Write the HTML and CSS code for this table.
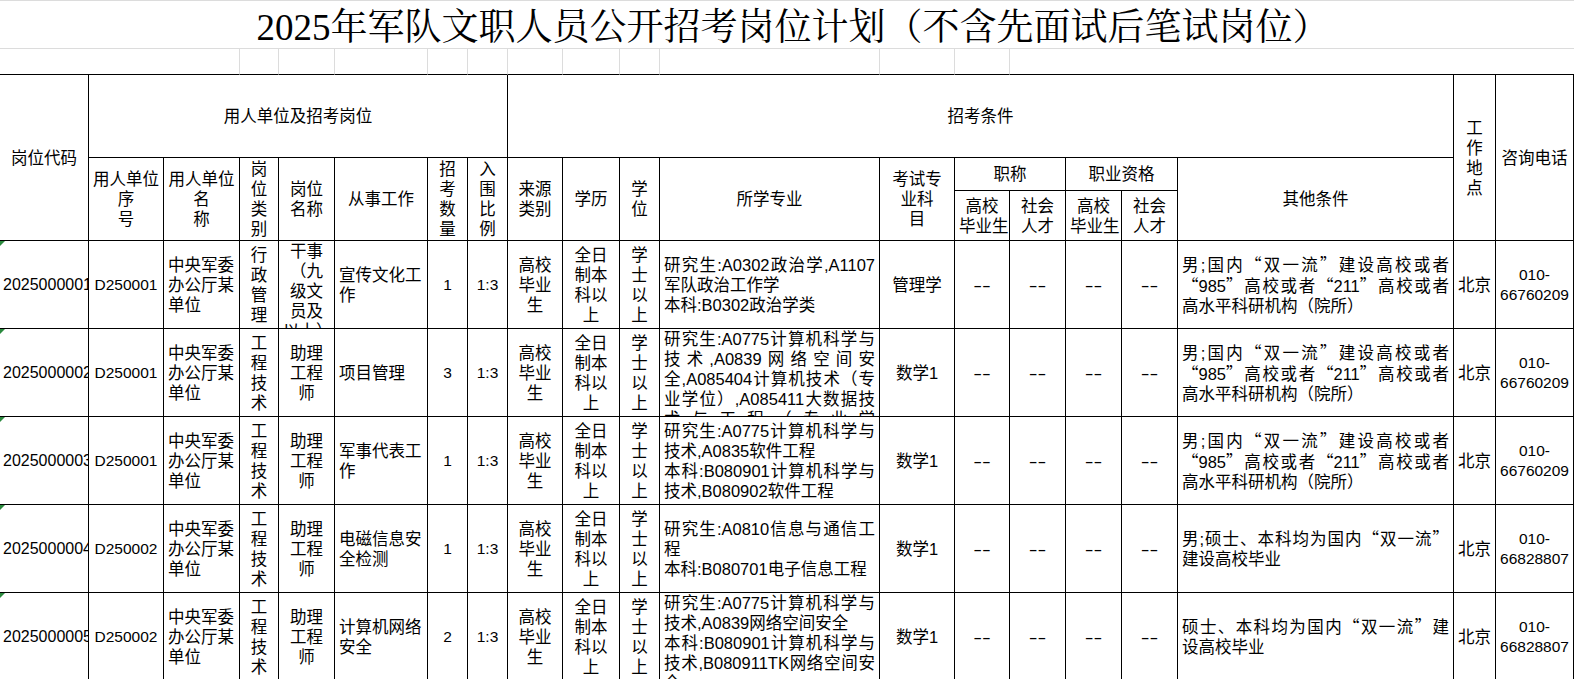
FILE: index.html
```html
<!DOCTYPE html>
<html lang="zh-CN">
<head>
<meta charset="utf-8">
<title>2025年军队文职人员公开招考岗位计划</title>
<link rel="stylesheet" href="styles.css">
</head>
<body>
<div class="sheet">
  <div class="title">2025年军队文职人员公开招考岗位计划（不含先面试后笔试岗位）</div>

  <div class="sp sp3"></div>
  <div class="sp"></div><div class="sp"></div><div class="sp"></div><div class="sp"></div>
  <div class="sp"></div><div class="sp"></div><div class="sp"></div><div class="sp"></div>
  <div class="sp"></div><div class="sp"></div><div class="sp"></div>
  <div class="sp sp6"></div>

  <div class="c rs3"><div class="t">岗位代码</div></div>
  <div class="c cs7"><div class="t">用人单位及招考岗位</div></div>
  <div class="c cs10"><div class="t">招考条件</div></div>
  <div class="c rs3"><div class="t">工<br>作<br>地<br>点</div></div>
  <div class="c rs3"><div class="t">咨询电话</div></div>

  <div class="c rs2"><div class="t">用人单位<br>序<br>号</div></div>
  <div class="c rs2"><div class="t">用人单位<br>名<br>称</div></div>
  <div class="c rs2"><div class="t">岗<br>位<br>类<br>别</div></div>
  <div class="c rs2"><div class="t">岗位<br>名称</div></div>
  <div class="c rs2"><div class="t">从事工作</div></div>
  <div class="c rs2"><div class="t">招<br>考<br>数<br>量</div></div>
  <div class="c rs2"><div class="t">入<br>围<br>比<br>例</div></div>
  <div class="c rs2"><div class="t">来源<br>类别</div></div>
  <div class="c rs2"><div class="t">学历</div></div>
  <div class="c rs2"><div class="t">学<br>位</div></div>
  <div class="c rs2"><div class="t">所学专业</div></div>
  <div class="c rs2"><div class="t">考试专<br>业科<br>目</div></div>
  <div class="c cs2"><div class="t">职称</div></div>
  <div class="c cs2"><div class="t">职业资格</div></div>
  <div class="c rs2"><div class="t">其他条件</div></div>
  <div class="c"><div class="t">高校<br>毕业生</div></div>
  <div class="c"><div class="t">社会<br>人才</div></div>
  <div class="c"><div class="t">高校<br>毕业生</div></div>
  <div class="c"><div class="t">社会<br>人才</div></div>

  <!-- row 1 -->
  <div class="c l code"><div class="t">2025000001</div></div>
  <div class="c num"><div class="t">D250001</div></div>
  <div class="c l"><div class="t">中央军委<br>办公厅某<br>单位</div></div>
  <div class="c"><div class="t">行<br>政<br>管<br>理</div></div>
  <div class="c"><div class="t">干事<br>（九<br>级文<br>员及<br>以上）</div></div>
  <div class="c l"><div class="t">宣传文化工<br>作</div></div>
  <div class="c num"><div class="t">1</div></div>
  <div class="c num"><div class="t">1:3</div></div>
  <div class="c"><div class="t">高校<br>毕业<br>生</div></div>
  <div class="c"><div class="t">全日<br>制本<br>科以<br>上</div></div>
  <div class="c"><div class="t">学<br>士<br>以<br>上</div></div>
  <div class="c l"><div class="t"><div class="j">研究生:A0302政治学,A1107</div><div>军队政治工作学</div><div>本科:B0302政治学类</div></div></div>
  <div class="c"><div class="t">管理学</div></div>
  <div class="c dash"><div class="t">--</div></div>
  <div class="c dash"><div class="t">--</div></div>
  <div class="c dash"><div class="t">--</div></div>
  <div class="c dash"><div class="t">--</div></div>
  <div class="c l"><div class="t"><div class="j">男;国内<span class="q">“</span>双一流<span class="q">”</span>建设高校或者</div><div class="j"><span class="q">“</span>985<span class="q">”</span>高校或者<span class="q">“</span>211<span class="q">”</span>高校或者</div><div>高水平科研机构（院所）</div></div></div>
  <div class="c"><div class="t">北京</div></div>
  <div class="c num"><div class="t">010-<br>66760209</div></div>

  <!-- row 2 -->
  <div class="c l code"><div class="t">2025000002</div></div>
  <div class="c num"><div class="t">D250001</div></div>
  <div class="c l"><div class="t">中央军委<br>办公厅某<br>单位</div></div>
  <div class="c"><div class="t">工<br>程<br>技<br>术</div></div>
  <div class="c"><div class="t">助理<br>工程<br>师</div></div>
  <div class="c l"><div class="t">项目管理</div></div>
  <div class="c num"><div class="t">3</div></div>
  <div class="c num"><div class="t">1:3</div></div>
  <div class="c"><div class="t">高校<br>毕业<br>生</div></div>
  <div class="c"><div class="t">全日<br>制本<br>科以<br>上</div></div>
  <div class="c"><div class="t">学<br>士<br>以<br>上</div></div>
  <div class="c l"><div class="t"><div class="j">研究生:A0775计算机科学与</div><div class="j">技术,A0839网络空间安</div><div class="j">全,A085404计算机技术（专</div><div class="j">业学位）,A085411大数据技</div><div class="j">术与工程（专业学</div><div>位）</div></div></div>
  <div class="c"><div class="t">数学1</div></div>
  <div class="c dash"><div class="t">--</div></div>
  <div class="c dash"><div class="t">--</div></div>
  <div class="c dash"><div class="t">--</div></div>
  <div class="c dash"><div class="t">--</div></div>
  <div class="c l"><div class="t"><div class="j">男;国内<span class="q">“</span>双一流<span class="q">”</span>建设高校或者</div><div class="j"><span class="q">“</span>985<span class="q">”</span>高校或者<span class="q">“</span>211<span class="q">”</span>高校或者</div><div>高水平科研机构（院所）</div></div></div>
  <div class="c"><div class="t">北京</div></div>
  <div class="c num"><div class="t">010-<br>66760209</div></div>

  <!-- row 3 -->
  <div class="c l code"><div class="t">2025000003</div></div>
  <div class="c num"><div class="t">D250001</div></div>
  <div class="c l"><div class="t">中央军委<br>办公厅某<br>单位</div></div>
  <div class="c"><div class="t">工<br>程<br>技<br>术</div></div>
  <div class="c"><div class="t">助理<br>工程<br>师</div></div>
  <div class="c l"><div class="t">军事代表工<br>作</div></div>
  <div class="c num"><div class="t">1</div></div>
  <div class="c num"><div class="t">1:3</div></div>
  <div class="c"><div class="t">高校<br>毕业<br>生</div></div>
  <div class="c"><div class="t">全日<br>制本<br>科以<br>上</div></div>
  <div class="c"><div class="t">学<br>士<br>以<br>上</div></div>
  <div class="c l"><div class="t"><div class="j">研究生:A0775计算机科学与</div><div>技术,A0835软件工程</div><div class="j">本科:B080901计算机科学与</div><div>技术,B080902软件工程</div></div></div>
  <div class="c"><div class="t">数学1</div></div>
  <div class="c dash"><div class="t">--</div></div>
  <div class="c dash"><div class="t">--</div></div>
  <div class="c dash"><div class="t">--</div></div>
  <div class="c dash"><div class="t">--</div></div>
  <div class="c l"><div class="t"><div class="j">男;国内<span class="q">“</span>双一流<span class="q">”</span>建设高校或者</div><div class="j"><span class="q">“</span>985<span class="q">”</span>高校或者<span class="q">“</span>211<span class="q">”</span>高校或者</div><div>高水平科研机构（院所）</div></div></div>
  <div class="c"><div class="t">北京</div></div>
  <div class="c num"><div class="t">010-<br>66760209</div></div>

  <!-- row 4 -->
  <div class="c l code"><div class="t">2025000004</div></div>
  <div class="c num"><div class="t">D250002</div></div>
  <div class="c l"><div class="t">中央军委<br>办公厅某<br>单位</div></div>
  <div class="c"><div class="t">工<br>程<br>技<br>术</div></div>
  <div class="c"><div class="t">助理<br>工程<br>师</div></div>
  <div class="c l"><div class="t">电磁信息安<br>全检测</div></div>
  <div class="c num"><div class="t">1</div></div>
  <div class="c num"><div class="t">1:3</div></div>
  <div class="c"><div class="t">高校<br>毕业<br>生</div></div>
  <div class="c"><div class="t">全日<br>制本<br>科以<br>上</div></div>
  <div class="c"><div class="t">学<br>士<br>以<br>上</div></div>
  <div class="c l"><div class="t"><div class="j">研究生:A0810信息与通信工</div><div>程</div><div>本科:B080701电子信息工程</div></div></div>
  <div class="c"><div class="t">数学1</div></div>
  <div class="c dash"><div class="t">--</div></div>
  <div class="c dash"><div class="t">--</div></div>
  <div class="c dash"><div class="t">--</div></div>
  <div class="c dash"><div class="t">--</div></div>
  <div class="c l"><div class="t"><div class="j">男;硕士、本科均为国内<span class="q">“</span>双一流<span class="q">”</span></div><div>建设高校毕业</div></div></div>
  <div class="c"><div class="t">北京</div></div>
  <div class="c num"><div class="t">010-<br>66828807</div></div>

  <!-- row 5 -->
  <div class="c l code"><div class="t">2025000005</div></div>
  <div class="c num"><div class="t">D250002</div></div>
  <div class="c l"><div class="t">中央军委<br>办公厅某<br>单位</div></div>
  <div class="c"><div class="t">工<br>程<br>技<br>术</div></div>
  <div class="c"><div class="t">助理<br>工程<br>师</div></div>
  <div class="c l"><div class="t">计算机网络<br>安全</div></div>
  <div class="c num"><div class="t">2</div></div>
  <div class="c num"><div class="t">1:3</div></div>
  <div class="c"><div class="t">高校<br>毕业<br>生</div></div>
  <div class="c"><div class="t">全日<br>制本<br>科以<br>上</div></div>
  <div class="c"><div class="t">学<br>士<br>以<br>上</div></div>
  <div class="c l"><div class="t"><div class="j">研究生:A0775计算机科学与</div><div>技术,A0839网络空间安全</div><div class="j">本科:B080901计算机科学与</div><div class="j">技术,B080911TK网络空间安</div><div>全</div></div></div>
  <div class="c"><div class="t">数学1</div></div>
  <div class="c dash"><div class="t">--</div></div>
  <div class="c dash"><div class="t">--</div></div>
  <div class="c dash"><div class="t">--</div></div>
  <div class="c dash"><div class="t">--</div></div>
  <div class="c l"><div class="t"><div class="j">硕士、本科均为国内<span class="q">“</span>双一流<span class="q">”</span>建</div><div>设高校毕业</div></div></div>
  <div class="c"><div class="t">北京</div></div>
  <div class="c num"><div class="t">010-<br>66828807</div></div>
</div>
</body>
</html>
```

FILE: styles.css
```css
html, body {
  margin: 0;
  padding: 0;
  overflow: hidden;
  background: #fff;
}

body {
  font-family: "Liberation Sans", "Noto Sans CJK SC", sans-serif;
  font-size: 16.5px;
  line-height: 20px;
  color: #000;
}

.sheet {
  display: grid;
  width: 1574px;
  grid-template-columns: 89px 75px 76px 39px 56px 93px 40px 40px 55px 57px 40px 220px 75px 55px 56px 56px 56px 276px 42px 78px;
  grid-template-rows: 49px 26px 83px 33px 50px repeat(5, 88px);
}

.title {
  grid-column: 1 / -1;
  border-top: 1px solid #dcdcdc;
  border-bottom: 1px solid #dcdcdc;
  display: flex;
  align-items: center;
  justify-content: center;
  padding-top: 6px;
  padding-left: 12px;
  box-sizing: border-box;
  font-family: "Liberation Serif", "Noto Serif CJK SC", "Noto Sans CJK SC", serif;
  font-size: 37px;
  line-height: 40px;
  white-space: nowrap;
  overflow: hidden;
}

.sp {
  border-right: 1px solid #dcdcdc;
  border-bottom: 1px solid #000;
}

.sp3 { grid-column: span 3; }
.sp6 { grid-column: span 6; border-right: none; }

.c {
  border-right: 1px solid #000;
  border-bottom: 1px solid #000;
  overflow: hidden;
  display: flex;
  flex-direction: column;
  padding: 0 4px;
  text-align: center;
  white-space: nowrap;
  min-width: 0;
  min-height: 0;
}

.t {
  margin: auto 0;
}

.l { text-align: left; }

.rs2 { grid-row: span 2; }
.rs3 { grid-row: span 3; }
.cs2 { grid-column: span 2; }
.cs7 { grid-column: span 7; }
.cs10 { grid-column: span 10; }

.j {
  text-align: justify;
  text-align-last: justify;
}

.q {
  font-family: "Noto Sans CJK SC", sans-serif;
  font-feature-settings: "fwid" 1;
}

.num { font-size: 15.5px; }

.dash {
  font-size: 16.5px;
}

.dash .t {
  transform: scaleX(1.6);
}

.code {
  position: relative;
  padding-left: 3px;
  padding-right: 0;
  font-size: 16px;
}

.code::before {
  content: "";
  position: absolute;
  left: 0;
  top: 0;
  border-top: 5px solid #2b8a3e;
  border-right: 5px solid transparent;
}
```
